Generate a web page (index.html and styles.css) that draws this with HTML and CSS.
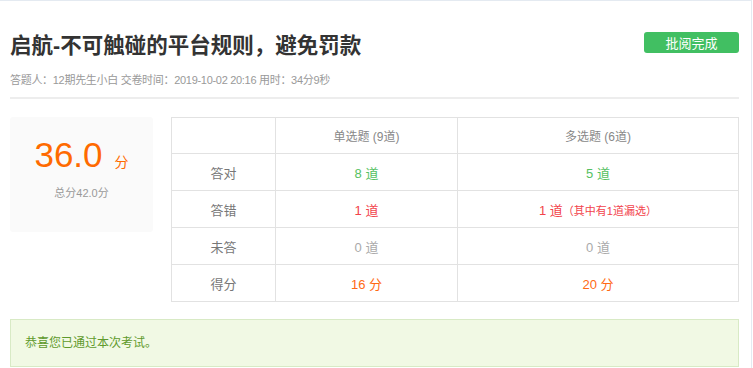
FILE: index.html
```html
<!DOCTYPE html>
<html lang="zh-CN">
<head>
<meta charset="utf-8">
<title>考试结果</title>
<link rel="stylesheet" href="styles.css">
</head>
<body>
<div class="panel">
  <div class="head">
    <h1 class="title">启航-不可触碰的平台规则，避免罚款</h1>
    <button class="btn-done" type="button">批阅完成</button>
  </div>
  <div class="meta">答题人：12期先生小白 交卷时间：2019-10-02 20:16 用时：34分9秒</div>
  <div class="divider"></div>
  <div class="result">
    <div class="score-box">
      <div class="score"><span class="score-num">36.0</span><span class="score-unit">分</span></div>
      <div class="score-total">总分42.0分</div>
    </div>
    <table class="stats">
      <colgroup>
        <col class="c1"><col class="c2"><col class="c3">
      </colgroup>
      <tr class="hrow">
        <th></th>
        <th>单选题 (9道)</th>
        <th>多选题 (6道)</th>
      </tr>
      <tr>
        <td class="label">答对</td>
        <td class="ok">8 道</td>
        <td class="ok">5 道</td>
      </tr>
      <tr>
        <td class="label">答错</td>
        <td class="bad">1 道</td>
        <td class="bad">1 道<span class="note">（其中有1道漏选）</span></td>
      </tr>
      <tr>
        <td class="label">未答</td>
        <td class="none">0 道</td>
        <td class="none">0 道</td>
      </tr>
      <tr>
        <td class="label">得分</td>
        <td class="pts">16 分</td>
        <td class="pts">20 分</td>
      </tr>
    </table>
  </div>
  <div class="notice">恭喜您已通过本次考试。</div>
</div>
</body>
</html>
```

FILE: styles.css
```css
* { box-sizing: border-box; }
html, body { margin: 0; padding: 0; background: #fff; }
body {
  font-family: "Liberation Sans", "Noto Sans CJK SC", sans-serif;
  color: #666;
}
.panel {
  margin-right: 1px;
  border: 1px solid #e4eaf1;
  border-left: 0;
  padding: 31px 12px 20px 10px;
  background: #fff;
}
.head {
  display: flex;
  justify-content: space-between;
  align-items: flex-start;
}
.title {
  margin: 0;
  font-size: 21.5px;
  line-height: 28px;
  font-weight: bold;
  color: #333;
}
.btn-done {
  width: 95px;
  height: 21px;
  border: 0;
  border-radius: 3px;
  background: #41bf62;
  color: #fff;
  font-family: "Noto Sans CJK SC", sans-serif;
  font-size: 13px;
  line-height: 21px;
  padding: 0;
}
.meta {
  margin-top: 12px;
  font-size: 11px;
  line-height: 16px;
  letter-spacing: -0.3px;
  color: #999;
}
.divider {
  margin-top: 9px;
  height: 2px;
  background: #ededed;
}
.result {
  display: flex;
  gap: 18px;
  margin-top: 18px;
}
.score-box {
  width: 143px;
  height: 115px;
  background: #fafafa;
  border-radius: 3px;
  text-align: center;
  padding-top: 18px;
}
.score {
  color: #ff6a00;
  line-height: 40px;
}
.score-num {
  font-size: 35px;
}
.score-unit {
  font-size: 14px;
  margin-left: 12px;
  font-family: "Noto Sans CJK SC", sans-serif;
}
.score-total {
  margin-top: 3px;
  font-size: 11px;
  line-height: 16px;
  color: #999;
}
.stats {
  flex: 1;
  border-collapse: collapse;
  font-size: 12px;
  text-align: center;
}
.stats .c1 { width: 104px; }
.stats .c2 { width: 182px; }
.stats th, .stats td {
  border: 1px solid #e2e2e2;
  padding: 0;
  font-weight: normal;
}
.stats tr { height: 37px; }
.stats tr.hrow { height: 36px; }
.stats th { color: #888; }
.stats .label { color: #777; font-size: 13px; }
.stats .ok { color: #55c162; font-size: 13px; }
.stats .bad { color: #f2434b; font-size: 13px; }
.stats .none { color: #aaa; font-size: 13px; }
.stats .pts { color: #ff6a14; font-size: 13px; }
.stats .note { font-size: 11px; }
.notice {
  margin-top: 17px;
  height: 48px;
  border: 1px solid #d8eac5;
  background: #f1f9e4;
  color: #5f9a2c;
  font-size: 12px;
  line-height: 46px;
  padding-left: 14px;
}
```
